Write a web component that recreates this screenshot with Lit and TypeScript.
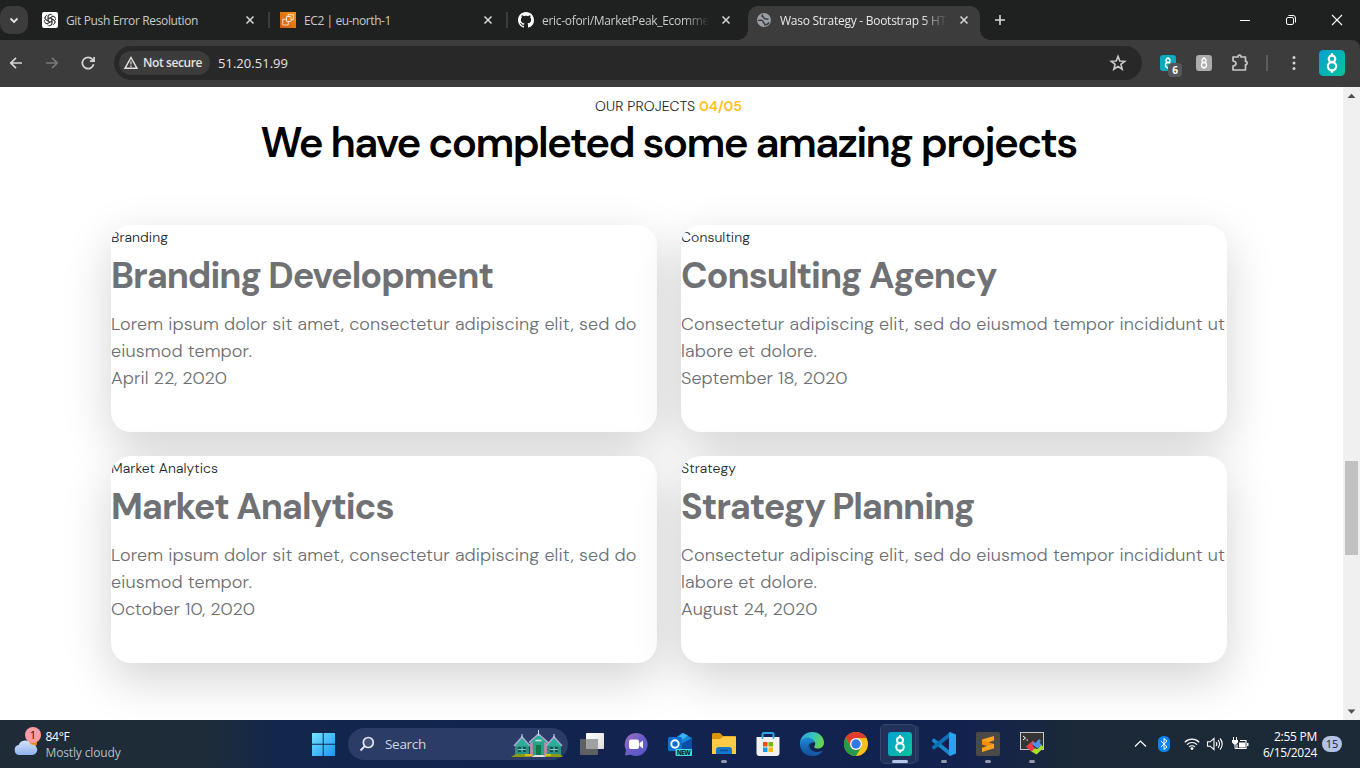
import { LitElement, html, css, svg } from "lit";
import { customElement } from "lit/decorators.js";

const closeIcon = html`<svg class="x" width="16" height="16" viewBox="0 0 16 16"><path d="M4.5 4.5l7 7M11.5 4.5l-7 7" stroke="#d2d3d2" stroke-width="1.6" fill="none"/></svg>`;

const eight = svg`<g fill="none" stroke="#fff" stroke-width="2"><circle cx="12" cy="8.2" r="3"/><circle cx="12" cy="15" r="3.8"/><path d="M12 3v2.2M12 18.6v2.4"/></g>`;

const icons = {
  gpt: html`<svg width="16" height="16" viewBox="0 0 16 16"><rect width="16" height="16" rx="2" fill="#fff"/><g fill="none" stroke="#333" stroke-width=".8">${[0, 60, 120, 180, 240, 300].map(a => svg`<path transform="rotate(${a} 8 8)" d="M6.100 9V4.600a2.500 2.500 0 0 1 4.600-1.200M6.100 6.900l3.800-2.200a2.400 2.400 0 0 1 3.300 1"/>`)}</g></svg>`,
  ec2: html`<svg width="16" height="16" viewBox="0 0 16 16"><defs><linearGradient id="o" x1="0" y1="1" x2="1" y2="0"><stop stop-color="#cf5a10"/><stop offset="1" stop-color="#f8920f"/></linearGradient></defs><rect width="16" height="16" fill="url(#o)"/><g fill="none" stroke="#fff" stroke-opacity=".85" stroke-width=".9"><rect x="6.500" y="4.500" width="4.500" height="5" rx=".5"/><path d="M8 4.500V2.700h5.300v5H11M6.500 7.300H2.700v5.700h5.500V9.500"/></g></svg>`,
  github: html`<svg width="16" height="16" viewBox="0 0 16 16"><path fill="#fff" d="M8 0C3.58 0 0 3.58 0 8c0 3.54 2.29 6.53 5.47 7.59.4.07.55-.17.55-.38 0-.19-.01-.82-.01-1.490-2.010.370-2.530-.490-2.690-.940-.090-.230-.480-.940-.820-1.130-.280-.150-.680-.520-.010-.530.630-.010 1.080.580 1.230.820.720 1.210 1.870.870 2.330.660.070-.520.280-.870.510-1.070-1.780-.200-3.640-.890-3.640-3.950 0-.870.310-1.590.820-2.150-.080-.200-.360-1.020.080-2.120 0 0 .670-.210 2.200.820.640-.180 1.320-.270 2-.270s1.360.090 2 .270c1.530-1.040 2.200-.820 2.200-.820.440 1.100.160 1.920.080 2.120.510.560.820 1.270.820 2.150 0 3.070-1.870 3.750-3.650 3.950.290.250.540.730.540 1.480 0 1.070-.010 1.930-.010 2.200 0 .210.150.460.550.380A8.010 8.010 0 0 0 16 8c0-4.420-3.580-8-8-8z"/></svg>`,
  globe: html`<svg width="16" height="16" viewBox="0 0 16 16"><circle cx="8" cy="8" r="7" fill="#9aa0a6"/><path d="M2 8.500c1.500-.2 3.500-.8 4.500.2s.2 1.600 1.200 2.200 1.300 1 1.200 2c2-.1 3.600-1.300 4-2.600M7 2.500C5.500 3.500 5.800 4.600 7 4.800s.5 1.700 2 2 2.500-.2 3.500.5" fill="none" stroke="#3c3c3c" stroke-width="1.500"/></svg>`,
};

@customElement("browser-bar")
class BrowserBar extends LitElement {
  static styles = css`
    :host { display: block; height: 87px; background: #1f2120; color: #e3e3e3; font: 12px/16px "Open Sans", "Noto Sans", sans-serif; }
    svg { display: block; flex: none; }
    .strip { display: flex; height: 40px; background: #1f2120; align-items: center; }
    .list { width: 28px; height: 28px; border-radius: 10px; background: #3c3c3c; display: flex; align-items: center; justify-content: center; margin-right: 14px; }
    .tab { display: flex; align-items: center; width: 226px; height: 16px; color: #c9cac9; }
    .label { width: 169px; margin-left: 8px; padding-top: 2px; white-space: nowrap; flex: none; }
    .fade { -webkit-mask-image: linear-gradient(90deg, #000 84%, transparent 99%); }
    .x { margin-left: 7px; }
    .sep { width: 2px; height: 16px; background: #3c3c3c; margin: 0 10px 0 0; }
    .tab.active { box-sizing: border-box; position: relative; align-self: flex-end; width: 232px; height: 34px; padding: 0 8px 6px; background: #3c3c3c; border-radius: 10px 10px 0 0; color: #e8e8e8; margin-left: 4px; }
    .tab.active::before, .tab.active::after { content: ""; position: absolute; bottom: 0; width: 10px; height: 10px; }
    .tab.active::before { left: -10px; background: radial-gradient(circle at 0 0, transparent 9.500px, #3c3c3c 10px); }
    .tab.active::after { right: -10px; background: radial-gradient(circle at 100% 0, transparent 9.500px, #3c3c3c 10px); }
    .plus { margin-left: 12px; }
    .win { display: flex; gap: 30px; margin-left: auto; margin-right: 15px; }
    .tools { display: flex; align-items: center; height: 47px; box-sizing: border-box; padding: 0 15px 1px 6px; background: #3c3c3c; border-radius: 0 8px 0 0; }
    .nav { display: flex; gap: 16px; margin-right: 16px; }
    .omni { box-sizing: border-box; display: flex; align-items: center; width: 1028px; height: 34px; border-radius: 17px; background: #282828; padding: 0 15px 0 5px; flex: none; }
    .chip { box-sizing: border-box; display: flex; align-items: center; width: 91px; height: 24px; border-radius: 12px; background: #3c3c3c; padding-left: 4px; gap: 4px; font-weight: 600; white-space: nowrap; }
    .url { margin-left: 8px; font-size: 13px; white-space: nowrap; }
    .star { margin-left: auto; }
    .ext { display: flex; align-items: center; margin-left: auto; width: 188px; }
    .ext1 { position: relative; margin: 0 20px 0 3px; }
    .badge { position: absolute; left: 8px; top: 8px; width: 14px; height: 14px; border-radius: 4px; background: #54585c; color: #fff; font: 700 10px/14px "Open Sans", sans-serif; text-align: center; }
    .div { width: 2px; height: 16px; background: #5c5e5e; margin: 0 18px 0 16px; }
    .puzzle { margin-left: 18px; }
    .dots { margin-right: auto; }
  `;
  render() {
    return html`
      <div class="strip">
        <div class="list"><svg width="10" height="10" viewBox="0 0 10 10"><path d="M1.500 3.500L5 7l3.500-3.500" fill="none" stroke="#e3e3e3" stroke-width="1.800"/></svg></div>
        <div class="tab">${icons.gpt}<div class="label"><span data-w="132">Git Push Error Resolution</span></div>${closeIcon}</div>
        <div class="sep"></div>
        <div class="tab">${icons.ec2}<div class="label"><span data-w="87">EC2 | eu-north-1</span></div>${closeIcon}</div>
        <div class="sep"></div>
        <div class="tab">${icons.github}<div class="label fade"><span data-w="167">eric-ofori/MarketPeak_Ecomme</span></div>${closeIcon}</div>
        <div class="tab active">${icons.globe}<div class="label fade"><span data-w="166">Waso Strategy - Bootstrap 5 HT</span></div>${closeIcon}</div>
        <svg class="plus" width="16" height="16" viewBox="0 0 16 16"><path d="M8 3v10M3 8h10" stroke="#d8d9d8" stroke-width="1.600"/></svg>
        <div class="win">
          <svg width="16" height="16" viewBox="0 0 16 16"><path d="M3 8.500h10" stroke="#fff"/></svg>
          <svg width="16" height="16" viewBox="0 0 16 16"><g fill="none" stroke="#fff"><rect x="3.500" y="5.500" width="7" height="7" rx="1.500"/><path d="M5.500 3.500H10a2.500 2.500 0 0 1 2.500 2.500v4.500"/></g></svg>
          <svg width="16" height="16" viewBox="0 0 16 16"><path d="M3 3l10 10M13 3L3 13" stroke="#fff" stroke-width="1.100"/></svg>
        </div>
      </div>
      <div class="tools">
        <div class="nav">
          <svg width="20" height="20" viewBox="0 0 20 20"><path d="M16 10H5M10 4.800L4.800 10l5.200 5.200" fill="none" stroke="#d5d5d5" stroke-width="1.700"/></svg>
          <svg width="20" height="20" viewBox="0 0 20 20"><path d="M4 10h11M10 4.800l5.200 5.200-5.200 5.200" fill="none" stroke="#767776" stroke-width="1.700"/></svg>
          <svg width="20" height="20" viewBox="0 0 20 20"><path d="M15.600 11.300A5.700 5.700 0 1 1 14.400 6.300L16 7.900M16.100 4v4.200h-4.200" fill="none" stroke="#d5d5d5" stroke-width="1.700"/></svg>
        </div>
        <div class="omni">
          <div class="chip"><svg width="16" height="16" viewBox="0 0 16 16"><path d="M8 2.500L14 13.300H2z" fill="none" stroke="#e3e3e3" stroke-width="1.400"/><path d="M8 6.200v3.400M8 10.600v1.500" stroke="#e3e3e3" stroke-width="1.200"/></svg><span data-w="59">Not secure</span></div>
          <div class="url"><span data-w="70">51.20.51.99</span></div>
          <svg class="star" width="18" height="18" viewBox="0 0 18 18"><path d="M9 2.400l1.800 4.600 4.900.3-3.800 3.100 1.300 4.800L9 12.500l-4.200 2.700 1.300-4.800-3.800-3.100 4.900-.3z" fill="none" stroke="#c9cbca" stroke-width="1.600"/></svg>
        </div>
        <div class="ext">
          <div class="ext1"><svg width="16" height="16" viewBox="0 0 24 24"><rect width="24" height="24" rx="4" fill="#08aabd"/>${eight}</svg><div class="badge">6</div></div>
          <svg width="16" height="16" viewBox="0 0 24 24"><rect width="24" height="24" rx="5" fill="#acacac"/>${eight}</svg>
          <svg class="puzzle" width="20" height="20" viewBox="0 0 20 20"><path d="M3 4h5V3q1.500-1.600 3 0v1h4.500v4.500h.8q1.700 1.500 0 3.200h-.8V17H3v-4q3-.4 3-2.500T3 8z" fill="none" stroke="#c5c7c6" stroke-width="1.700" stroke-linejoin="round"/></svg>
          <div class="div"></div>
          <svg class="dots" width="16" height="16" viewBox="0 0 16 16" fill="#d0d1d0"><circle cx="8" cy="2.500" r="1.500"/><circle cx="8" cy="8" r="1.500"/><circle cx="8" cy="13.500" r="1.500"/></svg>
          <svg width="26" height="26" viewBox="0 0 24 24"><defs><linearGradient id="t" x1="0" y1="0" x2="1" y2="1"><stop stop-color="#07a0d4"/><stop offset="1" stop-color="#07c39a"/></linearGradient></defs><rect width="24" height="24" rx="4" fill="url(#t)"/>${eight}</svg>
        </div>
      </div>`;
  }
}

const projects = [
  { tag: "Branding", tagW: 57, title: "Branding Development", titleW: 382, l1: "Lorem ipsum dolor sit amet, consectetur adipiscing elit, sed do", w1: 525.5, l2: "eiusmod tempor.", w2: 141, date: "April 22, 2020", dw: 116 },
  { tag: "Consulting", tagW: 69, title: "Consulting Agency", titleW: 315.5, l1: "Consectetur adipiscing elit, sed do eiusmod tempor incididunt ut", w1: 544, l2: "labore et dolore.", w2: 136, date: "September 18, 2020", dw: 166.5 },
  { tag: "Market Analytics", tagW: 107, title: "Market Analytics", titleW: 282.5, l1: "Lorem ipsum dolor sit amet, consectetur adipiscing elit, sed do", w1: 525.5, l2: "eiusmod tempor.", w2: 141, date: "October 10, 2020", dw: 144 },
  { tag: "Strategy", tagW: 55, title: "Strategy Planning", titleW: 293.5, l1: "Consectetur adipiscing elit, sed do eiusmod tempor incididunt ut", w1: 544, l2: "labore et dolore.", w2: 136, date: "August 24, 2020", dw: 136.5 },
];

@customElement("project-page")
class ProjectPage extends LitElement {
  static styles = css`
    :host { display: flex; height: 633px; background: #fff; overflow: hidden; font-family: "DM Sans", Inter, sans-serif; }
    .content { width: 1343px; overflow: hidden; white-space: nowrap; }
    .over { text-align: center; font-size: 14px; line-height: 20px; color: #212529; padding: 9px 6px 0 0; font-weight: 300; }
    .over b { color: #ffc32a; font-weight: 700; }
    h1 { margin: 0 6px 0 0; text-align: center; font-size: 42px; line-height: 54px; font-weight: 600; color: #000; }
    .grid { display: grid; grid-template-columns: 546px 546px; gap: 24px; padding: 55px 0 0 111px; }
    .card { height: 207px; border-radius: 20px; background: #fff; box-shadow: 0 16px 48px rgba(0, 0, 0, .175); overflow: hidden; color: #6c6f73; font-size: 18px; line-height: 27px; font-weight: 300; }
    .tag { font-size: 14px; line-height: 25px; color: #212529; }
    h2 { margin: 0 0 10px; font-size: 36px; line-height: 51px; font-weight: 700; color: #6f7174; }
    .bar { width: 17px; background: #f0f0f0; display: flex; flex-direction: column; align-items: center; }
    .track { flex: 1; }
    .thumb { width: 13px; height: 94px; margin-top: 357px; background: #c1c1c1; }
  `;
  render() {
    return html`
      <div class="content">
        <div class="over"><span data-w="100">OUR PROJECTS</span> <b data-w="43">04/05</b></div>
        <h1><span data-w="816">We have completed some amazing projects</span></h1>
        <div class="grid">${projects.map(p => html`
          <div class="card">
            <div class="tag"><span data-w=${p.tagW}>${p.tag}</span></div>
            <h2><span data-w=${p.titleW}>${p.title}</span></h2>
            <div><span data-w=${p.w1}>${p.l1}</span></div>
            <div><span data-w=${p.w2}>${p.l2}</span></div>
            <div><span data-w=${p.dw}>${p.date}</span></div>
          </div>`)}
        </div>
      </div>
      <div class="bar">
        <svg width="17" height="17"><path d="M4.500 11l4-4.200 4 4.200z" fill="#505050"/></svg>
        <div class="track"><div class="thumb"></div></div>
        <svg width="17" height="17"><path d="M4.500 6.500l4 4.200 4-4.200z" fill="#505050"/></svg>
      </div>`;
  }
}

const apps = [
  { run: "", art: svg`<defs><linearGradient id="tv" x1="0" y1="0" x2="1" y2="1"><stop stop-color="#fff"/><stop offset="1" stop-color="#ddd"/></linearGradient></defs><rect x="6" y="1" width="18" height="16" rx="1" fill="url(#tv)"/><rect x="0" y="7" width="18" height="16" rx="1" fill="#5f6061"/><path d="M6 7h12v10H6z" fill="#a0a2a2"/>` },
  { run: "", art: svg`<defs><linearGradient id="ch" x1="0" y1="0" x2="1" y2="1"><stop stop-color="#a66fc0"/><stop offset=".5" stop-color="#6b5cc8"/><stop offset="1" stop-color="#5157c6"/></linearGradient></defs><path d="M12 1a11.500 11.500 0 1 1-5 21.800L1 23.500 2 18A11.500 11.500 0 0 1 12 1z" fill="url(#ch)"/><rect x="5" y="7.500" width="10" height="9.500" rx="2" fill="#fff"/><path d="M15.500 11l3.500-2.500v8L15.500 14z" fill="#fff"/>` },
  { run: "", art: svg`<path d="M6 7L14 1l10 5v12H6z" fill="#1688dc"/><path d="M8 7L15 1l5 2.500L8 12z" fill="#38b6f3"/><path d="M13 12L24 6v14H12z" fill="#0b4ea5"/><rect x="0" y="5" width="14" height="14" rx="1.500" fill="#0f70cf"/><circle cx="7" cy="12" r="3.700" fill="none" stroke="#fff" stroke-width="1.900"/><rect x="7.500" y="17" width="16.500" height="7" rx="1" fill="#3ee1dd"/><text x="8.700" y="22.800" font-size="6.200" font-weight="800" textLength="14" fill="#062b35">NEW</text>` },
  { run: "on", art: svg`<path d="M0 2.500Q0 1 1.500 1H8l3 3h12q1 0 1 1v6H0z" fill="#d8950b"/><path d="M0 7h8l3-2.500h12.500l.5.500v17H0z" fill="#ffca45"/><path d="M4 22v-4q0-3 3-3h10q3 0 3 3v4z" fill="#1475c9"/><path d="M8 18.500h8" stroke="#0a5198" stroke-width="1.500"/>` },
  { run: "", art: svg`<path d="M6.500 7V2.500q0-1.500 1.500-1.500h8q1.500 0 1.500 1.500V7" fill="none" stroke="#2ba8e7" stroke-width="2"/><path d="M.5 5h23v16q0 3-3 3h-17q-3 0-3-3z" fill="#f2f2f2"/><path d="M7 10h4.500v4.500H7z" fill="#f04c22"/><path d="M12.500 10H17v4.500h-4.500z" fill="#7bb70a"/><path d="M7 15.500h4.500V20H7z" fill="#08a3e9"/><path d="M12.500 15.500H17V20h-4.500z" fill="#fdb606"/><path d="M6.500 5v2M17.500 5v2" stroke="#2ba8e7" stroke-width="1.500"/>` },
  { run: "", art: svg`<defs><linearGradient id="e1" x1="0" y1="0" x2="1" y2=".3"><stop stop-color="#2ba4df"/><stop offset=".6" stop-color="#36c7b8"/><stop offset="1" stop-color="#65d34e"/></linearGradient><linearGradient id="e2" x1="0" y1="0" x2="0" y2="1"><stop stop-color="#1c8bd5"/><stop offset="1" stop-color="#124d99"/></linearGradient></defs><path d="M0 12C0 5 5 0 12 0s12 5 12 10.500c0 4-3 6-6.500 6-3 0-4-1.500-3-2.500 2-2.500 0-6-4-6-5 0-10 3-10.500 5z" fill="url(#e1)"/><path d="M0 12c0-4 4-6.500 7.500-6.500 4 0 6.500 2.500 6.700 5.200-4.200-1-6.700 3.300-4.700 6.800 2 3.400 7.500 4.500 13 1.500C20 23 16 24 12 24 5 24 0 19 0 12z" fill="url(#e2)"/><path d="M9 11c-3 5-.5 11 5 12.800C19 23.500 22 20 22.800 18.500c-5 2.500-10.300 1.500-12.500-2-.9-1.500-1-3.700-1.300-5.500z" fill="#155ba8"/>` },
  { run: "", art: svg`<circle cx="12" cy="12" r="12" fill="#fbc116"/><path d="M1.600 6A12 12 0 0 1 22.400 6H12L7 15z" fill="#e33b2e"/><path d="M1.600 6A12 12 0 0 0 12 24l5.200-9L12 17l-5-2z" fill="#249b4b"/><circle cx="12" cy="12" r="6" fill="#fff"/><circle cx="12" cy="12" r="4.700" fill="#3478e5"/>` },
  { run: "current", art: svg`<defs><linearGradient id="tt" x1="0" y1="0" x2="1" y2="1"><stop stop-color="#07a0d4"/><stop offset="1" stop-color="#07c39a"/></linearGradient></defs><rect width="24" height="24" rx="3" fill="url(#tt)"/>${eight}` },
  { run: "on", art: svg`<path d="M0 8l2-1.800L18 19v5L0 9.500z" fill="#1587cf"/><path d="M0 16l2 1.800L18 5V0L0 14.500z" fill="#0870b5"/><path d="M18 0l6 2.500v19L18 24l-1-1V1z" fill="#29a3f1"/>` },
  { run: "on", art: svg`<rect width="24" height="24" rx="2" fill="#4b4a49"/><path d="M6 7.500L18 4v4.500l-12 4z" fill="#ffa51d"/><path d="M6 8v4.500l12 4V12z" fill="#f78b0a"/><path d="M6 15.800l12-4v4.500L6 20z" fill="#ffa51d"/>` },
  { run: "on", art: svg`<rect x=".5" y=".5" width="23" height="17" fill="#343434" stroke="#c4c6c6"/><path d="M3 4l2.500 2L3 8M6.500 8H8" stroke="#fff" fill="none"/><path d="M6 14.500l7-6 2.500 3-3 2 2.500 2.500-3.500 4z" fill="#ec3d43"/><path d="M12.500 9.500l3 1.500 3.500-4 2 2-1.500 1.500L22 13l-4.500 3.500-5-4z" fill="#4b91ee"/><path d="M11.500 19.500l4-3.500 1.500 1.500 4.500-4.500 2.500 2.500-7.500 7z" fill="#a8df28"/>` },
];

@customElement("task-bar")
class TaskBar extends LitElement {
  static styles = css`
    :host { display: flex; align-items: center; height: 48px; color: #fff; font: 12px/16px "Open Sans", sans-serif; background: linear-gradient(90deg, #1f2c37 0, #1e2c39 210px, #13274c 270px, #11244e 500px, #12224f 960px, #1b2938 1080px, #1c2a37 100%); white-space: nowrap; }
    svg { display: block; flex: none; }
    .weather { width: 297px; display: flex; align-items: center; margin-left: 14px; gap: 7.500px; }
    .icon { position: relative; width: 24px; height: 34px; }
    .sky { margin-top: 12px; }
    .count { position: absolute; left: 11px; top: 0; width: 16px; height: 16px; border-radius: 8px; background: #ff9ba4; color: #111; text-align: center; font-size: 11px; }
    .temp { padding-top: 2px; }
    .muted { color: #b6bcc0; }
    .search { box-sizing: border-box; width: 220px; height: 32px; border-radius: 16px; background: #2b3c66; margin: 0 2px 0 13px; padding: 0 5px 0 11px; display: flex; align-items: center; gap: 10px; font-size: 13.500px; color: #d0d5df; }
    .houses { margin-left: auto; }
    .app { box-sizing: border-box; position: relative; width: 44px; height: 40px; display: flex; align-items: center; justify-content: center; }
    .app.on::after, .app.current::after { content: ""; position: absolute; bottom: 1px; width: 6px; height: 3px; border-radius: 2px; background: #929aab; }
    .app.current::after { width: 16px; background: #b4c8ec; }
    .app.current::before { content: ""; box-sizing: border-box; position: absolute; left: 2px; width: 36px; height: 40px; border: 1px solid #33456b; border-radius: 5px; background: #ffffff12; box-shadow: 4px 0 0 -1px #24365e; }
    .app svg { position: relative; }
    .tray { display: flex; align-items: center; margin-left: auto; margin-right: 18px; }
    .bt { margin: 0 14px 0 11px; }
    .bat { margin: 0 12px 0 8px; }
    .spk { margin-left: 6px; }
    .clock { width: 56px; display: flex; flex-direction: column; align-items: flex-end; padding-top: 1px; margin-right: 5px; }
    .note { width: 20px; height: 16px; border-radius: 8px; background: #b4c3e3; color: #141a27; text-align: center; font-size: 11px; }
  `;
  render() {
    return html`
      <div class="weather">
        <div class="icon"><svg class="sky" width="24" height="17" viewBox="0 0 24 17"><defs><linearGradient id="cl" x1="0" y1="0" x2="0" y2="1"><stop stop-color="#d4e4fa"/><stop offset="1" stop-color="#8db2ed"/></linearGradient></defs><circle cx="18" cy="4" r="5" fill="#f28a13"/><path d="M5.500 16a5 5 0 0 1-.8-9.900A6.500 6.500 0 0 1 17 5.500 5.300 5.300 0 0 1 18.800 16z" fill="url(#cl)"/></svg><div class="count">1</div></div>
        <div class="temp"><div><span data-w="24">84°F</span></div><div class="muted"><span data-w="75">Mostly cloudy</span></div></div>
      </div>
      <svg width="24" height="24" viewBox="0 0 24 24"><defs><linearGradient id="w" gradientUnits="userSpaceOnUse" x1="0" y1="0" x2="24" y2="24"><stop stop-color="#7be6ff"/><stop offset="1" stop-color="#1597f5"/></linearGradient></defs><path d="M1 1h10.700v10.700H1zM12.700 1H24v10.700H12.700zM1 12.700h10.700V24H1zM12.700 12.700H24V24H12.700z" fill="url(#w)"/></svg>
      <div class="search">
        <svg width="16" height="16" viewBox="0 0 16 16"><circle cx="9.300" cy="6.500" r="5" fill="#42527a" stroke="#e4e7ee" stroke-width="1.700"/><path d="M5.800 10.200L1.500 14.500" stroke="#e4e7ee" stroke-width="1.900"/></svg>
        <span data-w="41">Search</span>
        <svg class="houses" width="52" height="28" viewBox="0 0 52 28">
          <path d="M4 14h14v12H4zM36 14h14v12H36z" fill="#25937f"/><path d="M19 11h17v15H19z" fill="#b58aa0"/><path d="M22 11h11v15H22z" fill="#21a58a"/>
          <path d="M3 16l8-9 8 9M18 12.500L27.500 4 37 12.500M35 16l8-9 8 9" fill="#2aae95" stroke="#a9a8d4" stroke-width="1.600"/><path d="M11 4v4M27.500 0v6M43 4v4" stroke="#d5d7ed"/>
          <path d="M7 17h8v5H7zM39 17h8v5h-8z" fill="#174e55"/><path d="M11 17v5M43 17v5M7 19.500h8M39 19.500h8" stroke="#6fd9c0"/><path d="M25 15h5v11h-5z" fill="#12764a"/><path d="M24.500 10.500h6" stroke="#e5d7df" stroke-width="1.500"/>
          <path d="M0 27l5-3h12l4 3zM33 27l4-3h12l3 3z" fill="#8a9a16"/><path d="M20 27l4-2h8l3 2z" fill="#e8dfd9"/><path d="M14 25h7M34 25h6" stroke="#d8bd20" stroke-width="2"/>
        </svg>
      </div>
      ${apps.map(a => html`<div class="app ${a.run}"><svg width="24" height="24" viewBox="0 0 24 24">${a.art}</svg></div>`)}
      <div class="tray">
        <svg width="13" height="16" viewBox="0 0 13 16"><path d="M1 10.500l5.500-5.500 5.500 5.500" fill="none" stroke="#fff" stroke-width="1.200"/></svg>
        <svg class="bt" width="12" height="16" viewBox="0 0 12 16"><rect width="12" height="16" rx="5.500" fill="#0a84f2"/><path d="M3 5l6 6-3 2.500v-11L9 5l-6 6" fill="none" stroke="#fff"/></svg>
        <svg width="16" height="16" viewBox="0 0 16 16"><g fill="none" stroke="#fff" stroke-width="1.200"><path d="M.8 6.200a10.200 10.200 0 0 1 14.400 0M3 8.600a7 7 0 0 1 10 0M5.200 10.900a4 4 0 0 1 5.600 0"/></g><circle cx="8" cy="12.600" r="1.400" fill="#fff"/></svg>
        <svg class="spk" width="18" height="16" viewBox="0 0 18 16"><g fill="none" stroke="#fff" stroke-width="1.100"><path d="M1.500 5.800h2.700L8 2.500v11l-3.800-3.300H1.500zM10 6a3 3 0 0 1 0 4M12 4.200a5.500 5.500 0 0 1 0 7.600M14 2.500a8 8 0 0 1 0 11"/></g></svg>
        <svg class="bat" width="17" height="16" viewBox="0 0 17 16"><path d="M8 4.500h6v8H5v-4" fill="none" stroke="#fff" stroke-width="1.200"/><path d="M7 6.500h6v5H7zM15 7h1.500v3H15zM0 4h6v2.500L4 8.500H2L0 6.500zM1 1h1v3H1zM4 1h1v3H4z" fill="#fff"/><path d="M3 8v4.500h2" fill="none" stroke="#fff"/></svg>
        <div class="clock"><span data-w="43">2:55 PM</span><span data-w="54">6/15/2024</span></div>
        <div class="note">15</div>
      </div>`;
  }
}

/* Tracks each labelled run so that it spans its design width. */
function track(root: ShadowRoot) {
  root.querySelectorAll<HTMLElement>("[data-w]").forEach(el => {
    const count = (el.textContent ?? "").length;
    el.style.letterSpacing = "0px";
    const spacing = (Number(el.dataset.w) - el.getBoundingClientRect().width) / count;
    el.style.letterSpacing = spacing.toFixed(3) + "px";
  });
}

@customElement("app-root")
class AppRoot extends LitElement {
  static styles = css`:host { display: block; width: 1360px; height: 768px; overflow: hidden; }`;
  async firstUpdated() {
    const parts = [...this.renderRoot.querySelectorAll<LitElement>("browser-bar, project-page, task-bar")];
    await Promise.all(parts.map(p => p.updateComplete));
    parts.forEach(p => track(p.shadowRoot!));
    await document.fonts.ready;
    parts.forEach(p => track(p.shadowRoot!));
  }
  render() {
    return html`<browser-bar></browser-bar><project-page></project-page><task-bar></task-bar>`;
  }
}
